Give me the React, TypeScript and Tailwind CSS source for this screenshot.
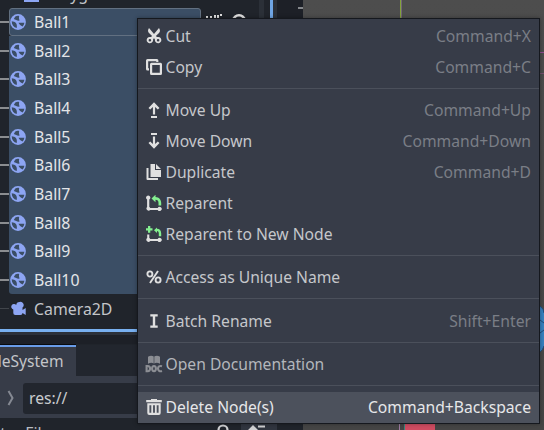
import type { ReactNode } from "react";

type IconProps = { className?: string };
type Entry = { icon: (p: IconProps) => ReactNode; label: string; shortcut?: string; tone?: "muted" | "active" };

const Svg = ({ className = "", children }: IconProps & { children: ReactNode }) => (
  <svg viewBox="0 0 16 16" className={`block h-4 w-4 shrink-0 ${className}`} fill="#e0e0e0">
    {children}
  </svg>
);

const CutIcon = () => (
  <Svg>
    <path d="M3 0C1.600 2.200 1.800 3.800 3 5L6.100 8 5 9.100A3.200 3.200 0 1 0 7.100 12.300c0-.7 0-1 .2-1.300L8 10.200l.7.800c.2.300.2.600.2 1.300A3.200 3.200 0 1 0 11 9.100L9.900 8 13 5C14.200 3.800 14.400 2.200 13 0L8 6.100zM3.900 11a1.300 1.300 0 1 1 0 2.600A1.300 1.300 0 0 1 3.900 11zm8.200 0a1.300 1.300 0 1 1 0 2.600A1.300 1.300 0 0 1 12.100 11z" fillRule="evenodd" />
  </Svg>
);
const CopyIcon = () => (
  <Svg>
    <path d="M1.500 0A1.500 1.500 0 0 0 0 1.500V10a1.500 1.500 0 0 0 1.500 1.500H3V9.300h-.8V2.200h8V3h2.200V1.500A1.500 1.500 0 0 0 10.900 0zM5.500 3.700A1.500 1.500 0 0 0 4 5.200v9.300A1.500 1.500 0 0 0 5.500 16h9a1.500 1.500 0 0 0 1.500-1.500V5.200a1.500 1.500 0 0 0-1.500-1.500zM6.200 5.900h7.600v7.900H6.200z" fillRule="evenodd" />
  </Svg>
);
const UpIcon = () => (
  <Svg>
    <path d="M5 14h6v2H5zM6.900 12.500V5L4.200 7.600 2.500 6 8 .3 13.500 6l-1.700 1.600L9.100 5v7.500z" />
  </Svg>
);
const DownIcon = () => (
  <Svg>
    <path d="M5 0h6v2H5zM6.900 3.500V11L4.200 8.400 2.500 10 8 15.700 13.500 10l-1.700-1.600L9.100 11V3.500z" />
  </Svg>
);
const DuplicateIcon = () => (
  <Svg>
    <path d="M.5 4h2v10h9.500v2H1.500a1 1 0 0 1-1-1zM4.500 0H9v6h6v7H4.500zM10 0l5 5h-5z" />
  </Svg>
);
const ReparentIcon = () => (
  <Svg>
    <path d="M2.200.5a2.100 2.100 0 0 1 1.100 3.900v7.700a2 2 0 0 1 .9.800h7.500a2.100 2.100 0 1 1 0 2.100H4.200a2.100 2.100 0 1 1-3.100-2.900V4.400A2.100 2.100 0 0 1 2.200.5z" />
    <path d="M9.500-.3v2.200C13 2 15.200 4.500 15.200 8v2.500h-2.700V8c0-2-1-3.200-3-3.200v2.400L5.500 3.500z" fill="#84f090" />
  </Svg>
);
const ReparentNewIcon = () => (
  <Svg>
    <path d="M1.200 8.500h2.100v3.600a2 2 0 0 1 .9.800h7.500a2.100 2.100 0 1 1 0 2.100H4.200a2.100 2.100 0 1 1-3-2.900z" />
    <path d="M2 0h2.300v2.200h2.200v2.300H4.300v2.200H2V4.500H-.2V2.200H2zM11 1.500v1.300c2.700 0 4.200 1.800 4.200 4.700v2.800h-2.400V7.500c0-1.500-.6-2.300-1.800-2.400v1.800L8 4.200z" fill="#84f090" />
  </Svg>
);
const PercentIcon = () => (
  <Svg>
    <g fill="none" stroke="#e0e0e0" strokeWidth="1.9">
      <ellipse cx="3.900" cy="5" rx="2.500" ry="2.600" />
      <ellipse cx="12.100" cy="11" rx="2.500" ry="2.600" />
      <path d="M12 2 4 14" />
    </g>
  </Svg>
);
const RenameIcon = () => (
  <Svg>
    <path d="M4.300 1.200h7.400v2.300H9.200v9h2.500v2.300H4.300v-2.300h2.500v-9H4.300z" />
  </Svg>
);
const DocIcon = () => (
  <Svg className="overflow-visible opacity-50">
    <path d="M2 .8C4.200-.7 6.300-.4 7.700.6v7C6 6.400 4.200 6.600 2 7.800zM8.300.6c1.400-1 3.500-1.300 5.700.2v7c-2.200-1.200-4-1.400-5.700-.2z" />
    <g fill="none" stroke="#e0e0e0" strokeWidth="2.100">
      <path d="M.6 10v5.200h1.200c3 0 3-5.200 0-5.200z" />
      <ellipse cx="8" cy="12.600" rx="1.900" ry="2.600" />
      <path d="M16 10.200c-2.500-.8-4 .4-4 2.400s1.500 3.200 4 2.400" />
    </g>
  </Svg>
);
const TrashIcon = () => (
  <Svg>
    <path d="M5 0v1H.2v2.200h15.600V1H11V0zM1.300 4.300V14a2 2 0 0 0 2 2h9.400a2 2 0 0 0 2-2V4.300zM3.400 6.300h1.900v7.500H3.400zm3.650 0h1.900v7.500h-1.900zm3.650 0h1.900v7.500h-1.900z" fillRule="evenodd" />
  </Svg>
);
const BallIcon = () => (
  <Svg>
    <circle cx="8" cy="8" r="7.900" fill="#8da5f3" />
    <path d="M5.300 2.500c1.500-.9 3-.9 3.900-.4-.4 1.700-.2 3.200.5 4.500C7.500 7.200 5.800 5.800 3.800 5.100zM1.700 7.300c1.600.1 3.300.7 4.200 1.700 1 1.400 1.200 3.200.8 5C3.700 13.300 1.700 11 1.700 7.300zM8.500 8.700h5.900c-.2 1.500-.8 2.700-1.800 3.700-1.900-.8-3.200-2-4.100-3.700z" fill="#3b4e65" />
  </Svg>
);
const CameraIcon = () => (
  <Svg>
    <path d="M9.500 1A3.300 3.300 0 0 0 6.200 4a2.800 2.800 0 1 0-2.900 4.500V12a2 2 0 0 0 2 2h5.200a2 2 0 0 0 2-2l3.200 2V7l-3.200 2V6.500A3.200 3.200 0 0 0 9.500 1z" fill="#8da5f3" />
  </Svg>
);

const groups: Entry[][] = [
  [
    { icon: CutIcon, label: "Cut", shortcut: "Command+X" },
    { icon: CopyIcon, label: "Copy", shortcut: "Command+C" },
  ],
  [
    { icon: UpIcon, label: "Move Up", shortcut: "Command+Up" },
    { icon: DownIcon, label: "Move Down", shortcut: "Command+Down" },
    { icon: DuplicateIcon, label: "Duplicate", shortcut: "Command+D" },
    { icon: ReparentIcon, label: "Reparent" },
    { icon: ReparentNewIcon, label: "Reparent to New Node" },
  ],
  [{ icon: PercentIcon, label: "Access as Unique Name" }],
  [{ icon: RenameIcon, label: "Batch Rename", shortcut: "Shift+Enter" }],
  [{ icon: DocIcon, label: "Open Documentation", tone: "muted" }],
  [{ icon: TrashIcon, label: "Delete Node(s)", shortcut: "Command+Backspace", tone: "active" }],
];

const balls = Array.from({ length: 10 }, (_, i) => `Ball${i + 1}`);

function ContextMenu() {
  return (
    <div className="absolute top-[18px] left-[137px] h-[406px] w-[403px] border border-[#15181e] bg-[#373c48] pt-px shadow-[0_0_4px_rgba(0,0,0,0.35)]">
      {groups.map((group, g) => (
        <div key={g}>
          {g > 0 && (
            <div className="flex h-[12.4px] items-center">
              <div className="h-px w-full bg-[#4b505b]" />
            </div>
          )}
          {group.map(({ icon: Icon, label, shortcut, tone }) => (
            <div
              key={label}
              className={`flex h-[31px] items-center justify-between pr-2 pl-2 ${
                tone === "active" ? "bg-[#4c515c] text-[#e6e7e9]" : tone === "muted" ? "text-[#b3b6bb]" : "text-[#c5c7cb]"
              }`}
            >
              <span className="flex items-center gap-[3.5px] text-[15.65px]">
                <Icon />
                {label}
              </span>
              <span className={tone === "active" ? "" : "text-[#7a7e86]"}>{shortcut}</span>
            </div>
          ))}
        </div>
      ))}
    </div>
  );
}

function SceneTree() {
  return (
    <div className="h-[329px] w-[259px] shrink-0 overflow-hidden bg-[#20242b] text-[15.85px]">
      <div className="flex h-[7.6px] items-start gap-[8px] overflow-hidden pl-6">
        <span className="h-[2px] w-[15px] shrink-0 bg-[#8da5f3]" />
        <span className="-mt-[18px] text-[#c3c5c9]">Polygon2D</span>
      </div>
      {balls.map((name, i) => (
        <div key={name} className="flex h-[28.7px] items-center">
          <span className="h-[2px] w-[9px] bg-[#8b8d90]" />
          <span
            className={`flex h-full w-[192px] items-center gap-[8px] bg-[#3b4e65] text-[#e3e5e8] ${
              i === 0 ? "rounded-[3px] border border-[#627081]" : i === 9 ? "rounded-b-[3px] pl-px" : "pl-px"
            }`}
          >
            <BallIcon />
            {name}
          </span>
          {i === 0 && (
            <span className="flex gap-[14px] pl-[5px]">
              <svg viewBox="0 0 16 16" className="h-4 w-4 shrink-0" fill="#e0e0e0">
                <path d="M0 2h2v2H0zM4 2h2v2H4zM8 1h2v3H8zM11 1h2v3h-2zM14 0h2v2h-2z" />
              </svg>
              <svg viewBox="0 0 16 16" className="-ml-[5px] h-4 w-4 shrink-0" fill="none" stroke="#e0e0e0" strokeWidth="2.4">
                <path d="M1 8c3-9 11-9 14 0-3 7-11 7-14 0z" />
              </svg>
            </span>
          )}
        </div>
      ))}
      <div className="flex h-[29px] items-center gap-[8px] text-[#c3c5c9]">
        <span className="mr-[-7px] h-px w-[9px] bg-[#41454b]" />
        <CameraIcon />
        Camera2D
      </div>
    </div>
  );
}

function FileSystem() {
  return (
    <div className="flex flex-col">
      <div className="h-[3px] bg-[#78b0f0]" />
      <div className="h-[3px] bg-[#2c313a]" />
      <div className="h-[9px] bg-[#1d2027]" />
      <div className="h-px w-[76px] bg-[#080a0d]" />
      <div className="flex h-[31px] bg-[#22262e]">
        <div className="flex w-[76px] justify-end border-t-2 border-[#699ce8] bg-[#373c48] pr-[12.5px] text-[15.6px] text-[#c3c5c9]">
          <span className="pt-[2px]">FileSystem</span>
        </div>
      </div>
      <div className="flex h-[42px] items-center bg-[#373c48] pt-[2px]">
        <svg viewBox="0 0 8 16" className="ml-[7px] h-4 w-2 shrink-0" fill="none" stroke="#858992" strokeWidth="2">
          <path d="m1.500 1 4 7-4 7" />
        </svg>
        <div className="ml-2 flex h-[31px] flex-1 items-center rounded-[3px] bg-[#22262e] pl-[6px] text-[#c9cbce]">res://</div>
      </div>
      <div className="flex h-[12px] overflow-hidden bg-[#20242b] text-[#b9bcc1]">
        <span className="ml-[-16px] w-[233px] shrink-0 pt-[3px] whitespace-nowrap">Filter Files</span>
        <svg viewBox="0 0 12 12" className="h-3 w-3 shrink-0" fill="none" stroke="#d0d1d3" strokeWidth="2.2">
          <circle cx="6" cy="12" r="4.5" />
        </svg>
        <span className="ml-[12px] h-full w-9 shrink-0 bg-[#30353f]">
          <svg viewBox="0 0 36 12" className="h-3 w-9" fill="#d0d1d3">
            <path d="m7 12 5-5 5 5zM17 7.500h7v2h-7z" />
          </svg>
        </span>
      </div>
    </div>
  );
}

function DockEdge() {
  return (
    <div className="flex w-[44px] shrink-0 bg-[#1d2027]">
      <div className="h-full w-[5px] bg-[#2b3038]" />
      <div className="h-full w-[6px] bg-[#20242b]" />
      <div className="h-full w-[3px] bg-[#6fa5e4]" />
      <div className="h-full w-[4px] bg-[#2b3038]" />
      <div className="mt-[7px] ml-auto h-[2px] w-[5px] bg-[#85888c]" />
    </div>
  );
}

function Viewport() {
  return (
    <div className="flex flex-1 justify-between bg-linear-to-b from-[#4d4d4d] to-[#454545]">
      <div className="flex h-full w-[132px] flex-col justify-between">
        <div className="ml-[97px] h-5 w-[2px] border-r border-[#716678] bg-[#84a33b]" />
        <div className="ml-[96px] flex h-[6px] border-l border-[#9d7ba2] pl-[4px]">
          <span className="h-[6px] w-[31px] border-l border-[#39877c] bg-[#cf4c61]" />
        </div>
      </div>
      <div className="w-1">
        <div className="mt-[52px] h-px bg-[#914d91]" />
        <div className="mt-[20px] h-px bg-[#75516f]" />
        <svg viewBox="0 0 4 48" className="mt-[231px] h-12 w-1">
          <path d="M0 1Q4 4 4 8v33q-1 4-4 6z" fill="#3680be" />
          <path d="M0 1Q4 4 4 8M0 47q3-2 4-6M0 15l4 3M0 28l4-3" stroke="#204b79" fill="none" />
        </svg>
      </div>
    </div>
  );
}

export default function App() {
  return (
    <div className="relative flex h-[430px] w-[544px] overflow-hidden bg-[#20242b] font-['Noto_Sans',sans-serif] text-[15.7px] leading-[24px]">
      <div className="w-[303px] shrink-0 overflow-hidden">
        <div className="flex">
          <SceneTree />
          <DockEdge />
        </div>
        <FileSystem />
      </div>
      <Viewport />
      <ContextMenu />
    </div>
  );
}
